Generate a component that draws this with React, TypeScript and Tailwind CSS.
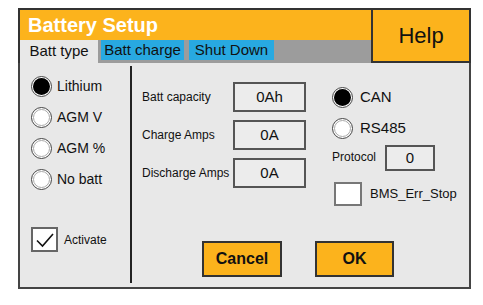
export default function App() {
  const batteryTypes = [
    { label: "Lithium", selected: true },
    { label: "AGM V", selected: false },
    { label: "AGM %", selected: false },
    { label: "No batt", selected: false },
  ];

  const fields = [
    { label: "Batt capacity", value: "0Ah" },
    { label: "Charge Amps", value: "0A" },
    { label: "Discharge Amps", value: "0A" },
  ];

  return (
    <div className="h-[305px] w-[483px] bg-white pl-[18px] pt-[8px] font-['Liberation_Sans',Arial,sans-serif] text-[#111]">
      <div className="w-[453px]">
        {/* header */}
        <div className="flex">
          <div className="flex flex-1 flex-col border-l-2 border-t-2 border-[#333]">
            <div className="flex h-[30px] items-center bg-[#fcb31c] pl-[8px] text-[20px] font-bold text-white">
              Battery Setup
            </div>
            <div className="flex h-[23px] bg-[#9c9c9c] text-[15px]">
              <div className="flex w-[78px] items-center justify-center bg-[#e8e8e8]">
                Batt type
              </div>
              <div className="ml-[3px] flex h-[20px] w-[83px] items-center justify-center bg-[#28a9e1]">
                Batt charge
              </div>
              <div className="ml-[5px] flex h-[20px] w-[85px] items-center justify-center bg-[#28a9e1]">
                Shut Down
              </div>
            </div>
          </div>
          <div className="flex h-[55px] w-[100px] items-center justify-center border-2 border-[#333] bg-[#fcb31c] text-[22px] font-medium">
            Help
          </div>
        </div>

        {/* body */}
        <div className="flex h-[226px] border-x-2 border-b-2 border-[#444] bg-[#e8e8e8]">
          <div className="flex w-[110px] flex-col pl-[11px] pt-[13px]">
            <div className="flex flex-col gap-[11px]">
              {batteryTypes.map((t) => (
                <div key={t.label} className="flex h-[20px] items-center gap-[5px] text-[14px]">
                  <Radio selected={t.selected} />
                  {t.label}
                </div>
              ))}
            </div>
            <div className="mt-[38px] flex items-center gap-[6px] text-[12px]">
              <div className="flex h-[25px] w-[27px] items-center justify-center border-2 border-[#666] bg-white">
                <svg width="20" height="16" viewBox="0 0 20 16" fill="none">
                  <path d="M2 8.5 L7.5 14 L18 2" stroke="#111" strokeWidth="1.6" />
                </svg>
              </div>
              Activate
            </div>
          </div>

          <div className="mb-[4px] mt-[3px] w-[2px] bg-[#222]" />

          <div className="flex flex-1 flex-col">
            <div className="flex">
              <div className="flex flex-col gap-[8px] pl-[10px] pt-[19px]">
                {fields.map((f) => (
                  <div key={f.label} className="flex items-center">
                    <div className="w-[91px] text-[12px]">{f.label}</div>
                    <div className="flex h-[30px] w-[73px] items-center justify-center border-2 border-[#555] bg-[#ececec] text-[15px]">
                      {f.value}
                    </div>
                  </div>
                ))}
              </div>

              <div className="flex flex-col pl-[26px] pt-[24px]">
                <div className="flex h-[20px] items-center gap-[7px] text-[15px]">
                  <Radio selected />
                  CAN
                </div>
                <div className="mt-[11px] flex h-[20px] items-center gap-[7px] text-[15px]">
                  <Radio selected={false} />
                  RS485
                </div>
                <div className="mt-[4px] flex items-center">
                  <div className="w-[53px] text-[12px]">Protocol</div>
                  <div className="mt-[3px] flex h-[26px] w-[50px] items-center justify-center border-2 border-[#555] bg-[#ececec] text-[15px]">
                    0
                  </div>
                </div>
                <div className="ml-[2px] mt-[11px] flex items-center gap-[8px] text-[13px]">
                  <div className="h-[24px] w-[28px] border-2 border-[#777] bg-white" />
                  BMS_Err_Stop
                </div>
              </div>
            </div>

            <div className="mt-auto mb-[10px] flex gap-[33px] pl-[70px]">
              <button className="flex h-[36px] w-[80px] items-center justify-center border-2 border-[#333] bg-[#fcb31c] text-[16px] font-semibold">
                Cancel
              </button>
              <button className="flex h-[36px] w-[79px] items-center justify-center border-2 border-[#333] bg-[#fcb31c] text-[16px] font-semibold">
                OK
              </button>
            </div>
          </div>
        </div>
      </div>
    </div>
  );
}

function Radio({ selected }: { selected: boolean }) {
  return (
    <div className="flex h-[21px] w-[21px] shrink-0 items-center justify-center rounded-full border border-[#444] bg-white">
      <div
        className={
          selected
            ? "h-[17px] w-[17px] rounded-full bg-black"
            : "h-[17px] w-[17px] rounded-full border border-[#aaa] bg-white"
        }
      />
    </div>
  );
}
